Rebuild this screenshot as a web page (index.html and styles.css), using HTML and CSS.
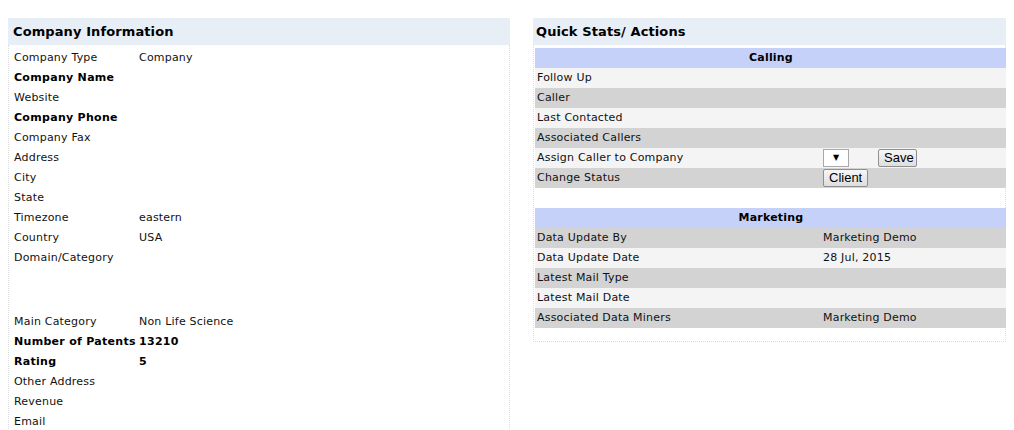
FILE: index.html
```html
<!DOCTYPE html>
<html>
<head>
<meta charset="utf-8">
<link rel="stylesheet" href="styles.css">
</head>
<body>
<div class="wrap">
  <div class="panel left">
    <div class="phead">Company Information</div>
    <div class="pbody info">
      <div class="row"><span class="lab">Company Type</span><span class="val">Company</span></div>
      <div class="row b"><span class="lab">Company Name</span><span class="val"></span></div>
      <div class="row"><span class="lab">Website</span><span class="val"></span></div>
      <div class="row b"><span class="lab">Company Phone</span><span class="val"></span></div>
      <div class="row"><span class="lab">Company Fax</span><span class="val"></span></div>
      <div class="row"><span class="lab">Address</span><span class="val"></span></div>
      <div class="row"><span class="lab">City</span><span class="val"></span></div>
      <div class="row"><span class="lab">State</span><span class="val"></span></div>
      <div class="row"><span class="lab">Timezone</span><span class="val">eastern</span></div>
      <div class="row"><span class="lab">Country</span><span class="val">USA</span></div>
      <div class="row tall"><span class="lab">Domain/Category</span><span class="val"></span></div>
      <div class="row"><span class="lab">Main Category</span><span class="val">Non Life Science</span></div>
      <div class="row b"><span class="lab">Number of Patents</span><span class="val">13210</span></div>
      <div class="row b"><span class="lab">Rating</span><span class="val">5</span></div>
      <div class="row"><span class="lab">Other Address</span><span class="val"></span></div>
      <div class="row"><span class="lab">Revenue</span><span class="val"></span></div>
      <div class="row"><span class="lab">Email</span><span class="val"></span></div>
    </div>
  </div>
  <div class="panel right">
    <div class="phead">Quick Stats/ Actions</div>
    <div class="pbody stats">
      <div class="tbl">
        <div class="th">Calling</div>
        <div class="tr l"><span class="c1">Follow Up</span><span class="c2"></span></div>
        <div class="tr g"><span class="c1">Caller</span><span class="c2"></span></div>
        <div class="tr l"><span class="c1">Last Contacted</span><span class="c2"></span></div>
        <div class="tr g"><span class="c1">Associated Callers</span><span class="c2"></span></div>
        <div class="tr l"><span class="c1">Assign Caller to Company</span><span class="c2"><span class="sel"><span class="arr">&#9660;</span></span><span class="btn save">Save</span></span></div>
        <div class="tr g"><span class="c1">Change Status</span><span class="c2"><span class="btn">Client</span></span></div>
      </div>
      <div class="tbl mkt">
        <div class="th">Marketing</div>
        <div class="tr g"><span class="c1">Data Update By</span><span class="c2">Marketing Demo</span></div>
        <div class="tr l"><span class="c1">Data Update Date</span><span class="c2">28 Jul, 2015</span></div>
        <div class="tr g"><span class="c1">Latest Mail Type</span><span class="c2"></span></div>
        <div class="tr l"><span class="c1">Latest Mail Date</span><span class="c2"></span></div>
        <div class="tr g"><span class="c1">Associated Data Miners</span><span class="c2">Marketing Demo</span></div>
      </div>
    </div>
  </div>
</div>
</body>
</html>
```
FILE: styles.css
```css
body {
  margin: 8px;
  font-family: "DejaVu Sans", Verdana, sans-serif;
  font-size: 11px;
  letter-spacing: 0.2px;
  color: #111;
}
.wrap {
  display: flex;
  align-items: flex-start;
  gap: 23px;
  margin-top: 10px;
}
.left { width: 502px; }
.right { width: 473px; }
.phead {
  height: 27px;
  line-height: 27px;
  background: #e7eef6;
  font-weight: bold;
  font-size: 13px;
  letter-spacing: 0.1px;
  padding-left: 5px;
  color: #000;
}
.right .phead { padding-left: 3px; }
.pbody {
  border: 1px dotted #dcdcdc;
  border-top: none;
}
.info {
  padding: 3px 0 0 5px;
}
.row {
  display: flex;
  height: 20px;
  line-height: 20px;
}
.row.tall { height: 64px; }
.row.b { font-weight: bold; color: #000; letter-spacing: 0.3px; }
.lab { width: 125px; flex: none; white-space: nowrap; }
.stats {
  padding: 3px 0 13px 1px;
  box-sizing: border-box;
}
.tbl { width: 472px; }
.mkt { margin-top: 20px; }
.th {
  height: 20px;
  line-height: 20px;
  background: #c6d1f9;
  text-align: center;
  font-weight: bold;
  color: #000;
}
.tr {
  display: flex;
  height: 20px;
  line-height: 20px;
}
.tr.l { background: #f4f4f4; }
.tr.g { background: #d3d3d3; }
.c1 { width: 286px; flex: none; padding-left: 2px; }
.c2 { display: flex; align-items: center; }
.sel {
  box-sizing: border-box;
  width: 26px;
  height: 18px;
  background: #fff;
  border: 1px solid #a9a9a9;
  display: flex;
  align-items: center;
  justify-content: center;
  font-size: 8px;
  letter-spacing: 0;
  color: #000;
  line-height: 1;
}
.btn {
  box-sizing: border-box;
  height: 18px;
  line-height: 16px;
  padding: 0 5px;
  border: 1px solid #8f8f8f;
  border-radius: 2px;
  background: linear-gradient(#f6f6f6, #dedede);
  font-family: "Liberation Sans", Arial, sans-serif;
  font-size: 13px;
  letter-spacing: 0;
  color: #000;
}
.save { margin-left: 29px; width: 39px; text-align: center; }
```
